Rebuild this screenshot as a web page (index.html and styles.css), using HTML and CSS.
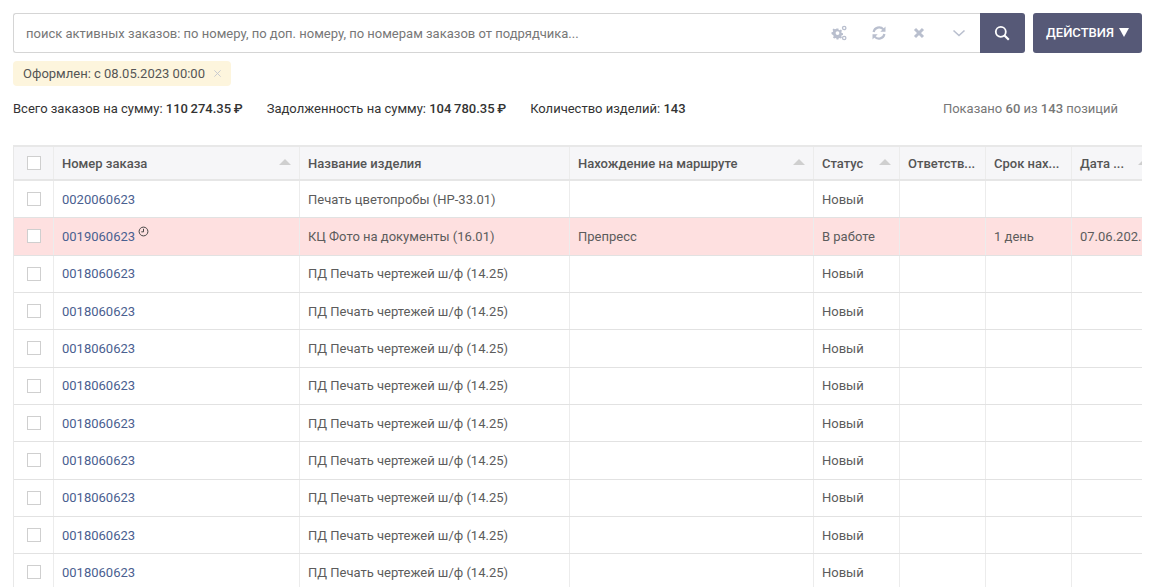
FILE: index.html
```html
<!DOCTYPE html>
<html lang="ru">
<head>
<meta charset="utf-8">
<title>Заказы</title>
<link rel="stylesheet" href="styles.css">
</head>
<body>
<div class="page">
  <div class="toolbar">
    <div class="search">
      <span class="placeholder">поиск активных заказов: по номеру, по доп. номеру, по номерам заказов от подрядчика...</span>
      <div class="search-icons">
        <svg class="ico" viewBox="0 0 16 16"><g fill="#b9bfce"><path fill-rule="evenodd" d="M5.600 3.600h1.800l.3 1.300 1 .4 1.100-.7 1.200 1.200-.7 1.100.4 1 1.300.3v1.800l-1.300.3-.4 1 .7 1.100-1.200 1.200-1.100-.7-1 .4-.3 1.300H5.600l-.3-1.300-1-.4-1.100.7-1.200-1.200.7-1.100-.4-1L.5 9V7.200l1.300-.3.4-1-.7-1.100 1.200-1.200 1.100.7 1-.4zM6.500 6.200a1.900 1.900 0 1 0 0 3.800 1.900 1.900 0 0 0 0-3.800z"/><circle cx="13.200" cy="3" r="1.700" fill="none" stroke="#b9bfce" stroke-width="1.300"/><circle cx="13.200" cy="13" r="1.700" fill="none" stroke="#b9bfce" stroke-width="1.300"/></g></svg>
        <svg class="ico" viewBox="0 0 16 16"><g fill="none" stroke="#b9bfce" stroke-width="2.200"><path d="M2.600 7A5.600 5.600 0 0 1 12.400 4.400"/><path d="M13.400 9A5.600 5.600 0 0 1 3.600 11.600"/></g><path fill="#b9bfce" d="M14.500 1.500v5.200H9.300zM1.500 14.500V9.300h5.200z"/></svg>
        <svg class="ico" viewBox="0 0 16 16"><path stroke="#b9bfce" stroke-width="3" d="M4 4l8 8M12 4l-8 8"/></svg>
        <svg class="ico" viewBox="0 0 16 16"><path fill="none" stroke="#b9bfce" stroke-width="1.600" d="M2.500 5.500L8 10.500l5.500-5"/></svg>
      </div>
    </div>
    <button class="search-btn" type="button" aria-label="Поиск"><svg viewBox="0 0 16 16" class="search-glyph"><circle cx="6.800" cy="6.800" r="5" fill="none" stroke="#fff" stroke-width="1.800"/><path stroke="#fff" stroke-width="2.200" d="M10.500 10.500l4.300 4.300"/></svg></button>
    <button class="actions" type="button">ДЕЙСТВИЯ <span class="tri"></span></button>
  </div>
  <div class="filters">
    <span class="chip">Оформлен: с 08.05.2023 00:00<svg class="chip-x" viewBox="0 0 10 10"><path stroke="#c4c7cf" stroke-width="1" d="M1.500 1.500l7 7M8.500 1.500l-7 7"/></svg></span>
  </div>
  <div class="summary">
    <span class="sum">Всего заказов на сумму: <b>110 274.35 ₽</b></span>
    <span class="sum">Задолженность на сумму: <b>104 780.35 ₽</b></span>
    <span class="sum">Количество изделий: <b>143</b></span>
    <span class="shown">Показано <b>60</b> из <b>143</b> позиций</span>
  </div>
  <div class="table">
    <div class="row head">
      <div class="cell chk"><span class="box"></span></div>
      <div class="cell sort">Номер заказа<i class="arrow"></i></div>
      <div class="cell">Название изделия</div>
      <div class="cell sort">Нахождение на маршруте<i class="arrow"></i></div>
      <div class="cell sort">Статус<i class="arrow"></i></div>
      <div class="cell">Ответств...</div>
      <div class="cell">Срок нах...</div>
      <div class="cell date">Дата ...<i class="arrow"></i></div>
    </div>
    <div class="row"><div class="cell chk"><span class="box"></span></div><div class="cell"><a class="num">0020060623</a></div><div class="cell">Печать цветопробы (HP-33.01)</div><div class="cell"></div><div class="cell">Новый</div><div class="cell"></div><div class="cell"></div><div class="cell"></div></div>
    <div class="row hot"><div class="cell chk"><span class="box"></span></div><div class="cell"><a class="num">0019060623</a><svg class="clock" viewBox="0 0 10 10"><circle cx="5" cy="5" r="4" fill="none" stroke="#444" stroke-width=".9"/><path fill="none" stroke="#444" stroke-width=".9" d="M5 2.500V5.300H3"/></svg></div><div class="cell">КЦ Фото на документы (16.01)</div><div class="cell">Препресс</div><div class="cell">В работе</div><div class="cell"></div><div class="cell">1 день</div><div class="cell">07.06.202.</div></div>
    <div class="row"><div class="cell chk"><span class="box"></span></div><div class="cell"><a class="num">0018060623</a></div><div class="cell">ПД Печать чертежей ш/ф (14.25)</div><div class="cell"></div><div class="cell">Новый</div><div class="cell"></div><div class="cell"></div><div class="cell"></div></div>
    <div class="row"><div class="cell chk"><span class="box"></span></div><div class="cell"><a class="num">0018060623</a></div><div class="cell">ПД Печать чертежей ш/ф (14.25)</div><div class="cell"></div><div class="cell">Новый</div><div class="cell"></div><div class="cell"></div><div class="cell"></div></div>
    <div class="row"><div class="cell chk"><span class="box"></span></div><div class="cell"><a class="num">0018060623</a></div><div class="cell">ПД Печать чертежей ш/ф (14.25)</div><div class="cell"></div><div class="cell">Новый</div><div class="cell"></div><div class="cell"></div><div class="cell"></div></div>
    <div class="row"><div class="cell chk"><span class="box"></span></div><div class="cell"><a class="num">0018060623</a></div><div class="cell">ПД Печать чертежей ш/ф (14.25)</div><div class="cell"></div><div class="cell">Новый</div><div class="cell"></div><div class="cell"></div><div class="cell"></div></div>
    <div class="row"><div class="cell chk"><span class="box"></span></div><div class="cell"><a class="num">0018060623</a></div><div class="cell">ПД Печать чертежей ш/ф (14.25)</div><div class="cell"></div><div class="cell">Новый</div><div class="cell"></div><div class="cell"></div><div class="cell"></div></div>
    <div class="row"><div class="cell chk"><span class="box"></span></div><div class="cell"><a class="num">0018060623</a></div><div class="cell">ПД Печать чертежей ш/ф (14.25)</div><div class="cell"></div><div class="cell">Новый</div><div class="cell"></div><div class="cell"></div><div class="cell"></div></div>
    <div class="row"><div class="cell chk"><span class="box"></span></div><div class="cell"><a class="num">0018060623</a></div><div class="cell">ПД Печать чертежей ш/ф (14.25)</div><div class="cell"></div><div class="cell">Новый</div><div class="cell"></div><div class="cell"></div><div class="cell"></div></div>
    <div class="row"><div class="cell chk"><span class="box"></span></div><div class="cell"><a class="num">0018060623</a></div><div class="cell">ПД Печать чертежей ш/ф (14.25)</div><div class="cell"></div><div class="cell">Новый</div><div class="cell"></div><div class="cell"></div><div class="cell"></div></div>
    <div class="row"><div class="cell chk"><span class="box"></span></div><div class="cell"><a class="num">0018060623</a></div><div class="cell">ПД Печать чертежей ш/ф (14.25)</div><div class="cell"></div><div class="cell">Новый</div><div class="cell"></div><div class="cell"></div><div class="cell"></div></div>
  </div>
</div>
</body>
</html>
```
FILE: styles.css
```css
* { box-sizing: border-box; }
html, body { margin: 0; height: 587px; overflow: hidden; background: #fff; }
body { font-family: Roboto, "Liberation Sans", sans-serif; font-size: 13px; color: #5c5c5c; }
.page { padding: 13px 14px 0 13px; }
.toolbar { display: flex; height: 40px; }
.search { flex: 1; display: flex; align-items: center; justify-content: space-between; border: 1px solid #d5d5d5; border-right: 0; border-radius: 3px 0 0 3px; padding: 0 13px 0 12px; background: #fff; }
.placeholder { color: #777; font-size: 13px; }
.search-icons { display: flex; gap: 24px; align-items: center; }
.ico { width: 16px; height: 16px; display: block; }
.search-btn { width: 45px; height: 40px; border: 0; background: #565977; border-radius: 0 3px 3px 0; padding: 0 2px 0 0; display: flex; align-items: center; justify-content: center; }
.search-glyph { width: 16px; height: 16px; }
.actions { margin-left: 8px; width: 109px; height: 40px; border: 0; border-radius: 3px; background: #565977; color: #fff; font: 500 13px Roboto, sans-serif; padding: 0 0 2px; display: flex; align-items: center; justify-content: center; gap: 5px; }
.tri { width: 0; height: 0; border-left: 5px solid transparent; border-right: 5px solid transparent; border-top: 9px solid #fff; }
.filters { margin-top: 8px; display: flex; }
.chip { display: flex; align-items: center; height: 25px; padding: 0 9px 0 10px; background: #fdf5dd; border-radius: 4px; color: #555; font-size: 13px; }
.chip-x { width: 9px; height: 9px; margin-left: 8px; }
.summary { margin-top: 13px; display: flex; height: 18px; align-items: center; color: #333; font-size: 13px; }
.sum { margin-right: 24px; }
.sum b { font-weight: 500; word-spacing: -.6px; }
.shown { margin-left: auto; margin-right: 24px; color: #777; }
.shown b { font-weight: 500; }
.table { margin-top: 28px; border-top: 2px solid #e8e8e8; border-left: 1px solid #e8e8e8; width: 1129px; overflow: hidden; }
.row { display: grid; grid-template-columns: 40px 246px 270px 244px 86px 86px 86px 70px; height: 37.33px; border-bottom: 1px solid #e2e2e2; }
.row.head { height: 34px; background: #f6f6f8; border-bottom: 2px solid #e6e6e6; font-weight: 500; color: #555; }
.row.hot { background: #fee0e0; }
.cell { display: flex; align-items: center; padding: 0 8px; border-right: 1px solid #ececec; white-space: nowrap; overflow: hidden; min-width: 0; }
.cell.chk { justify-content: center; padding: 0; }
.cell:last-child { border-right: 0; padding-right: 0; }
.cell.sort { justify-content: space-between; }
.box { width: 14px; height: 14px; border: 1px solid #cfcfcf; background: #fff; display: block; }
.arrow { flex-shrink: 0; width: 0; height: 0; border-left: 6px solid transparent; border-right: 6px solid transparent; border-bottom: 6px solid #cfcfcf; margin-top: -2px; }
.date .arrow { margin-left: 14px; }
.num { color: #4a6090; }
.clock { width: 11px; height: 11px; margin-left: 3px; margin-top: -10px; }
```
